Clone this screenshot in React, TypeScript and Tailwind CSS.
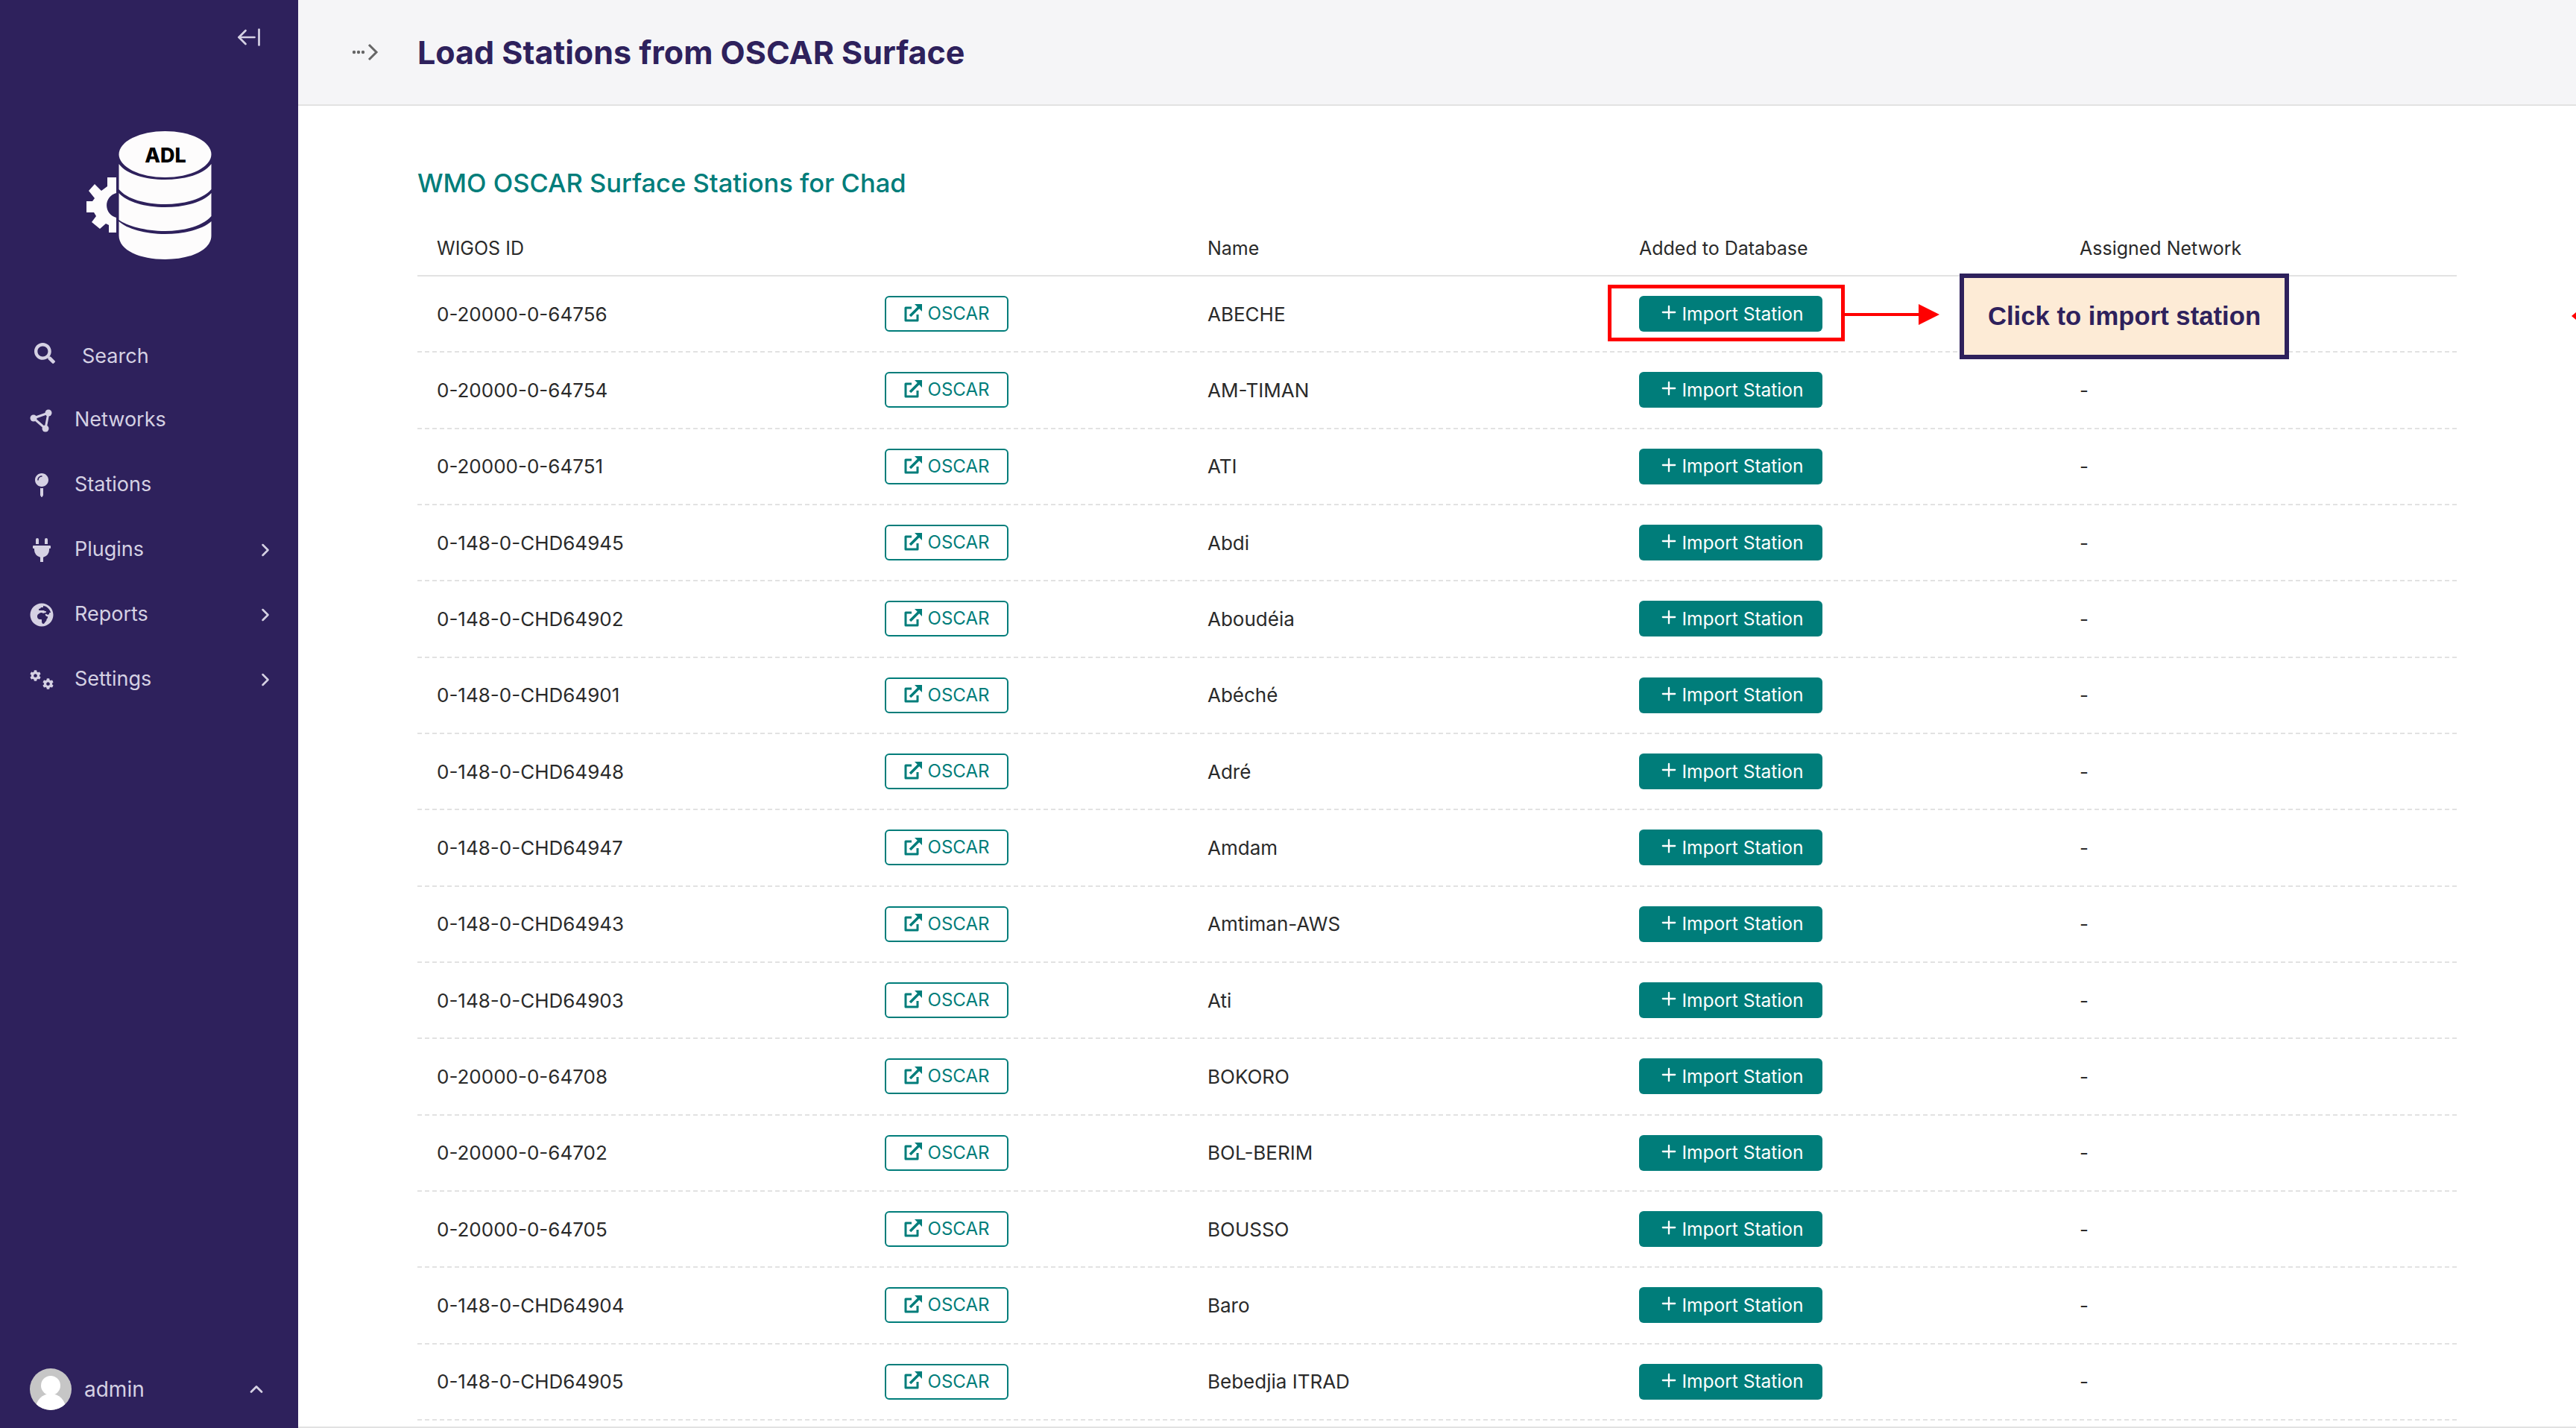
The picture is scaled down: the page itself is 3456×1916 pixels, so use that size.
import { ArrowLeftFromLine, ChevronRight, ChevronUp, Plus } from "lucide-react";
import { FaCog, FaGlobeAfrica, FaMapPin, FaPlug, FaSearch } from "react-icons/fa";

const ROWS = [
  ["0-20000-0-64756", "ABECHE"],
  ["0-20000-0-64754", "AM-TIMAN", "-"],
  ["0-20000-0-64751", "ATI", "-"],
  ["0-148-0-CHD64945", "Abdi", "-"],
  ["0-148-0-CHD64902", "Aboudéia", "-"],
  ["0-148-0-CHD64901", "Abéché", "-"],
  ["0-148-0-CHD64948", "Adré", "-"],
  ["0-148-0-CHD64947", "Amdam", "-"],
  ["0-148-0-CHD64943", "Amtiman-AWS", "-"],
  ["0-148-0-CHD64903", "Ati", "-"],
  ["0-20000-0-64708", "BOKORO", "-"],
  ["0-20000-0-64702", "BOL-BERIM", "-"],
  ["0-20000-0-64705", "BOUSSO", "-"],
  ["0-148-0-CHD64904", "Baro", "-"],
  ["0-148-0-CHD64905", "Bebedjia ITRAD", "-"],
];

function NetworkIcon() {
  return (
    <svg viewBox="0 0 32 32" className="h-[32px] w-[32px] text-[#d5d1e3]">
      <path d="M5 13 L25 6 L21 27 Z" fill="none" stroke="currentColor" strokeWidth="3" strokeLinejoin="round" />
      <circle cx="5" cy="13" r="4.500" fill="currentColor" />
      <circle cx="25" cy="6" r="4.500" fill="currentColor" />
      <circle cx="21" cy="27" r="4.500" fill="currentColor" />
    </svg>
  );
}

function SettingsIcon() {
  return (
    <div className="flex h-[26px] w-[32px] justify-between">
      <FaCog className="h-[15px] w-[15px] self-start" />
      <FaCog className="h-[15px] w-[15px] self-end" />
    </div>
  );
}

function Logo() {
  return (
    <svg viewBox="0 0 180 176" className="h-[176px] w-[180px]">
      <path
        d="M156 238 H144 V250 L136 256 L127 247 L119 256 L127 266 L124 270 H116 V285 H126 L129 290 L123 298 L134 307 L142 300 L146 302 V312 H156 V292 A17 17 0 0 1 156 259 Z"
        fill="#fdfcfc"
        transform="translate(-104 -176)"
      />
      <g transform="translate(-104 -176)" fill="#fdfcfc">
        <ellipse cx="221.5" cy="207" rx="62" ry="31" />
        <path d="M159.500 220 C170 234 195 241 221.500 241 C248 241 273 234 283.500 220 V254 C272 267 248 274 221.500 274 C195 274 170 267 159.500 254 Z" />
        <path d="M159.500 259 C170 271 195 278 221.500 278 C248 278 273 271 283.500 259 V290 C272 303 248 310 221.500 310 C195 310 170 303 159.500 295 Z" />
        <path d="M159.500 297 C170 307 195 314 221.500 314 C248 314 273 307 283.500 297 V316 C283.500 336 255 348 221.500 348 C188 348 159.500 336 159.500 316 Z" />
      </g>
      <text x="118" y="42" textAnchor="middle" fontFamily="Inter, sans-serif" fontWeight="800" fontSize="27" fill="#000">
        ADL
      </text>
    </svg>
  );
}

function OscarIcon() {
  return (
    <svg viewBox="0 0 24 24" className="-mt-[3px] h-[24px] w-[24px]" fill="none">
      <path d="M10 5 H2 V22 H18 V14" stroke="#007d7a" strokeWidth="3" strokeLinejoin="round" />
      <path d="M8 16 L20 4" stroke="#007d7a" strokeWidth="3.500" />
      <path d="M14 0 H24 V10 Z" fill="#007d7a" />
    </svg>
  );
}

function Breadcrumb() {
  return (
    <svg viewBox="0 0 36 24" className="h-[24px] w-[36px]" fill="none">
      <circle cx="3" cy="12" r="2.200" fill="#666" />
      <circle cx="9" cy="12" r="2.200" fill="#666" />
      <circle cx="15" cy="12" r="2.200" fill="#666" />
      <path d="M23 2 L33 12 L23 22" stroke="#666" strokeWidth="3" />
    </svg>
  );
}

function Avatar() {
  return (
    <svg viewBox="0 0 56 56" className="h-[56px] w-[56px]">
      <clipPath id="avatar-clip">
        <circle cx="28" cy="28" r="28" />
      </clipPath>
      <g clipPath="url(#avatar-clip)">
        <rect width="56" height="56" fill="#c6c6c6" />
        <circle cx="28" cy="23" r="13" fill="#fff" />
        <ellipse cx="28" cy="54" rx="20" ry="20" fill="#fff" />
      </g>
    </svg>
  );
}

function NavItem({ icon, label, chevron }: { icon: React.ReactNode; label: string; chevron?: boolean }) {
  return (
    <div className="flex h-[87px] items-center pl-[40px] pr-[30px]">
      <div className="flex w-[32px] justify-center">{icon}</div>
      <span className="ml-[28px] flex-1">{label}</span>
      {chevron && <ChevronRight className="h-[28px] w-[28px]" strokeWidth={2.2} />}
    </div>
  );
}

export default function App() {
  return (
    <div className="flex h-[1916px] w-[3456px] overflow-hidden bg-white font-['Inter',sans-serif] text-[26px] text-[#2a2a2a]">
      <aside className="flex w-[400px] shrink-0 flex-col bg-[#2e215c] text-[27px] text-[#d5d1e3]">
        <div className="flex justify-end pr-[48px] pt-[32px]">
          <ArrowLeftFromLine className="h-[36px] w-[36px]" strokeWidth={1.8} />
        </div>
        <div className="mt-[108px] pl-[104px]">
          <Logo />
        </div>
        <nav className="mt-[84px]">
          <div className="flex h-[84px] items-center pl-[46px]">
            <FaSearch className="-mt-[8px] h-[28px] w-[28px] text-[#d5d1e3]" />
            <span className="ml-[36px]">Search</span>
          </div>
          <NavItem icon={<NetworkIcon />} label="Networks" />
          <NavItem icon={<FaMapPin className="h-[32px] w-[32px]" />} label="Stations" />
          <NavItem icon={<FaPlug className="h-[32px] w-[32px]" />} label="Plugins" chevron />
          <NavItem icon={<FaGlobeAfrica className="h-[32px] w-[32px]" />} label="Reports" chevron />
          <NavItem icon={<SettingsIcon />} label="Settings" chevron />
        </nav>
        <div className="mt-auto flex items-center pb-[24px] pl-[40px] pr-[42px]">
          <Avatar />
          <span className="ml-[17px] flex-1 text-[28px]">admin</span>
          <ChevronUp className="h-[28px] w-[28px]" strokeWidth={2.4} />
        </div>
      </aside>

      <main className="relative flex min-w-0 flex-1 flex-col border-b-2 border-[#e2e2e2]">
        <header className="flex h-[142px] shrink-0 items-center border-b-2 border-[#e2e2e2] bg-[#f5f5f7] pl-[72px]">
          <Breadcrumb />
          <h1 className="ml-[52px] text-[43px] font-bold text-[#2e215c]">Load Stations from OSCAR Surface</h1>
        </header>

        <section className="pl-[160px] pr-[160px]">
          <h2 className="mt-[79px] h-[50px] text-[34.5px] font-medium leading-[50px] text-[#007d7a]">
            WMO OSCAR Surface Stations for Chad
          </h2>
          <div className="mt-[40px] grid h-[60px] grid-cols-[601px_433px_579px_591px_532px] items-center border-b-2 border-[#e2e2e2] pb-[12px] text-[25px]">
            <div className="pl-[26px]">WIGOS ID</div>
            <div />
            <div className="pl-[26px]">Name</div>
            <div className="pl-[26px]">Added to Database</div>
            <div className="pl-[26px]">Assigned Network</div>
          </div>
          {ROWS.map(([id, name, network]) => (
            <div
              key={id}
              className="grid h-[102.33px] grid-cols-[601px_433px_579px_591px_532px] items-center border-b-2 border-dashed border-[#e2e2e2]"
            >
              <div className="pl-[26px]">{id}</div>
              <div className="pl-[26px]">
                <button className="flex h-[48px] w-[166px] items-center justify-center gap-[8px] rounded-[6px] border-2 border-[#007d7a] text-[24px] text-[#007d7a]">
                  <OscarIcon />
                  OSCAR
                </button>
              </div>
              <div className="pl-[26px]">{name}</div>
              <div className="pl-[26px]">
                <button className="flex h-[48px] w-[246px] items-center justify-center gap-[4px] rounded-[6px] bg-[#007d7a] text-[24.5px] text-white">
                  <Plus className="-mt-[4px] h-[28px] w-[28px]" strokeWidth={2} />
                  Import Station
                </button>
              </div>
              <div className="pl-[26px]">{network}</div>
            </div>
          ))}
        </section>

        {/* annotation drawn over the first row */}
        <div className="absolute left-[1757px] top-[382px] h-[76px] w-[318px] border-[5px] border-[#ff0000]" />
        <svg viewBox="0 0 127 28" className="absolute left-[2075px] top-[408px] h-[28px] w-[127px]">
          <path d="M0 12 H99 V0 L127 14 L99 28 V16 H0 Z" fill="#ff0000" />
        </svg>
        <div className="absolute left-[2229px] top-[367px] flex h-[115px] w-[442px] items-center justify-center border-[6px] border-[#2e215c] bg-[#fdebd6] font-['Liberation_Sans',sans-serif] text-[34.7px] font-bold text-[#2e215c]">
          Click to import station
        </div>
        <svg viewBox="0 0 6 16" className="absolute right-0 top-[416px] h-[16px] w-[6px]">
          <path d="M0 8 L6 3 V13 Z" fill="#ff0000" />
        </svg>
      </main>
    </div>
  );
}
